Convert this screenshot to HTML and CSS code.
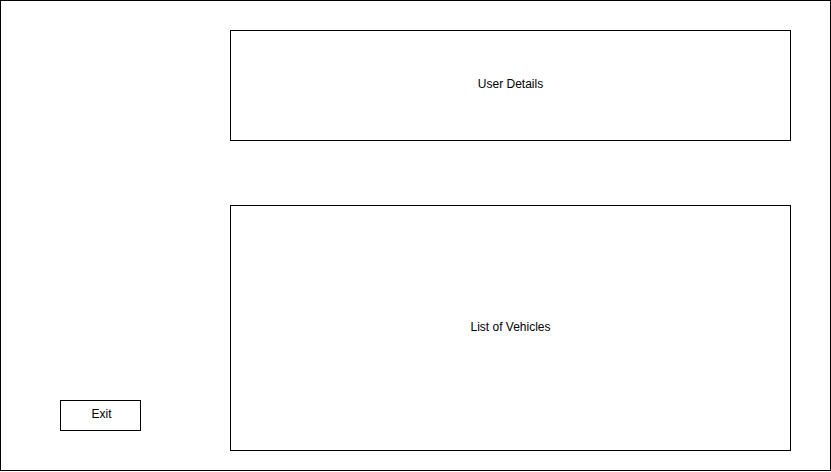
FILE: index.html
```html
<!DOCTYPE html>
<html lang="en">
<head>
<meta charset="utf-8">
<title>Vehicles</title>
<link rel="stylesheet" href="styles.css">
</head>
<body>
<div class="screen">
  <nav class="sidebar">
    <button class="exit" type="button">Exit</button>
  </nav>
  <main class="content">
    <section class="panel user-details">User Details</section>
    <section class="panel vehicle-list">List of Vehicles</section>
  </main>
</div>
</body>
</html>
```

FILE: styles.css
```css
* {
  box-sizing: border-box;
}

body {
  margin: 0;
  background: #fff;
  color: #000;
  font: 12px/16px "Liberation Sans", Arial, sans-serif;
}

.screen {
  display: flex;
  min-height: calc(100vh - 1px);
  padding: 29px 39px 19px 59px;
  border: 1px solid #000;
}

.sidebar {
  display: flex;
  flex: 0 0 170px;
  align-items: flex-end;
  padding-bottom: 20px;
}

.exit {
  min-width: 81px;
  padding: 5px 28px 8px 30px;
  border: 1px solid #000;
  border-radius: 0;
  background: #fff;
  color: inherit;
  font: inherit;
}

.content {
  display: flex;
  flex: 1;
  flex-direction: column;
  gap: 64px;
}

.panel {
  display: flex;
  align-items: center;
  justify-content: center;
  border: 1px solid #000;
}

.user-details {
  padding: 45px 0 48px;
}

.vehicle-list {
  flex: 1;
  padding-bottom: 2px;
}
```
